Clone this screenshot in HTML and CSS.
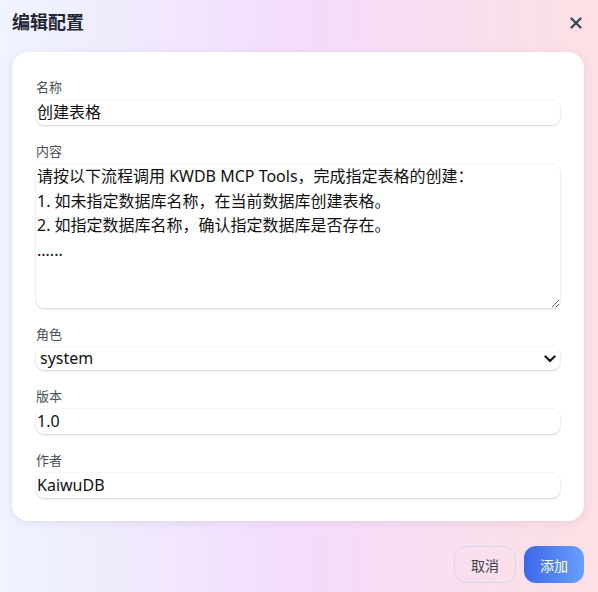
FILE: index.html
```html
<!DOCTYPE html>
<html lang="zh-CN">
<head>
<meta charset="utf-8">
<title>编辑配置</title>
<link rel="stylesheet" href="styles.css">
</head>
<body>
<div class="dialog">
  <header class="dialog-header">
    <h1 class="dialog-title">编辑配置</h1>
    <button class="close-btn" type="button" aria-label="关闭">
      <svg width="12" height="12" viewBox="0 0 12 12"><path d="M1.5 1.5 L10.5 10.5 M10.5 1.5 L1.5 10.5" stroke="#3a4859" stroke-width="2.4" stroke-linecap="round" fill="none"/></svg>
    </button>
  </header>
  <form class="card">
    <div class="field">
      <label class="field-label">名称</label>
      <input class="control" type="text" value="创建表格">
    </div>
    <div class="field">
      <label class="field-label">内容</label>
      <textarea class="control textarea">请按以下流程调用 KWDB MCP Tools，完成指定表格的创建：
1. 如未指定数据库名称，在当前数据库创建表格。
2. 如指定数据库名称，确认指定数据库是否存在。
......</textarea>
    </div>
    <div class="field">
      <label class="field-label">角色</label>
      <div class="select-wrap">
        <select class="control select">
          <option>system</option>
          <option>user</option>
          <option>assistant</option>
        </select>
        <svg class="chevron" width="12" height="8" viewBox="0 0 12 8"><path d="M1.5 1.5 L6 6 L10.5 1.5" stroke="#1f1f1f" stroke-width="2.4" fill="none" stroke-linecap="round" stroke-linejoin="round"/></svg>
      </div>
    </div>
    <div class="field">
      <label class="field-label">版本</label>
      <input class="control" type="text" value="1.0">
    </div>
    <div class="field">
      <label class="field-label">作者</label>
      <input class="control" type="text" value="KaiwuDB">
    </div>
  </form>
  <footer class="dialog-footer">
    <button class="btn btn-cancel" type="button">取消</button>
    <button class="btn btn-primary" type="button">添加</button>
  </footer>
</div>
</body>
</html>
```

FILE: styles.css
```css
* {
  box-sizing: border-box;
}

html, body {
  margin: 0;
  padding: 0;
}

body {
  width: 598px;
  height: 592px;
  overflow: hidden;
  font-family: "Noto Sans", "Noto Sans CJK SC", sans-serif;
  background: linear-gradient(90deg, #eef4ff 0%, #f4dcfb 50%, #fde0e4 100%);
  color: #111;
}

.dialog {
  display: flex;
  flex-direction: column;
  height: 100%;
}

.dialog-header {
  height: 44px;
  display: flex;
  align-items: center;
  justify-content: space-between;
  padding: 0 16px 0 12px;
}

.dialog-title {
  margin: 0;
  font-family: "Noto Sans CJK SC", sans-serif;
  font-size: 18px;
  font-weight: 700;
  line-height: 24px;
  color: #1e2533;
  margin-top: -2px;
}

.close-btn {
  border: none;
  background: none;
  padding: 0;
  width: 12px;
  height: 12px;
  display: flex;
  cursor: pointer;
  margin-top: 1px;
}

.card {
  margin: 8px 14px 0 12px;
  background: #fff;
  border-radius: 16px;
  padding: 26px 24px 23px;
  box-shadow: 0 2px 8px rgba(90, 70, 120, 0.10);
  display: flex;
  flex-direction: column;
  gap: 17px;
}

.field {
  display: flex;
  flex-direction: column;
}

.field-label {
  font-family: "Noto Sans CJK SC", sans-serif;
  font-size: 13px;
  line-height: 18px;
  color: #4a4f57;
  margin-bottom: 4px;
}

.control {
  display: block;
  width: 100%;
  height: 25px;
  border: none;
  outline: none;
  border-radius: 8px;
  background: #fff;
  padding: 0 1px;
  font-family: "Noto Sans", "Noto Sans CJK SC", sans-serif;
  font-size: 16px;
  line-height: 25px;
  color: #111;
  box-shadow: 0 1px 2px rgba(0, 0, 0, 0.16), 0 0 0 1px rgba(0, 0, 0, 0.025);
}

.textarea {
  height: 144px;
  line-height: 24.6px;
  padding: 0 1px;
  resize: vertical;
}

.select-wrap {
  position: relative;
}

.select {
  height: 23px;
  appearance: none;
  -webkit-appearance: none;
  padding: 0 4px;
  line-height: 23px;
}

.chevron {
  position: absolute;
  right: 4px;
  top: 8px;
  pointer-events: none;
}

.dialog-footer {
  display: flex;
  justify-content: flex-end;
  gap: 8px;
  padding: 0 14px;
  margin-top: 25px;
}

.btn {
  height: 37px;
  border-radius: 12px;
  font-family: "Noto Sans CJK SC", sans-serif;
  font-size: 14px;
  padding: 0 16px;
  cursor: pointer;
}

.btn-cancel {
  background: transparent;
  border: 1px solid #d3d9e0;
  color: #3d4450;
  width: 62px;
}

.btn-primary {
  border: none;
  color: #fff;
  width: 60px;
  background: linear-gradient(90deg, #3b67e8 0%, #6aa0ff 100%);
}
```
